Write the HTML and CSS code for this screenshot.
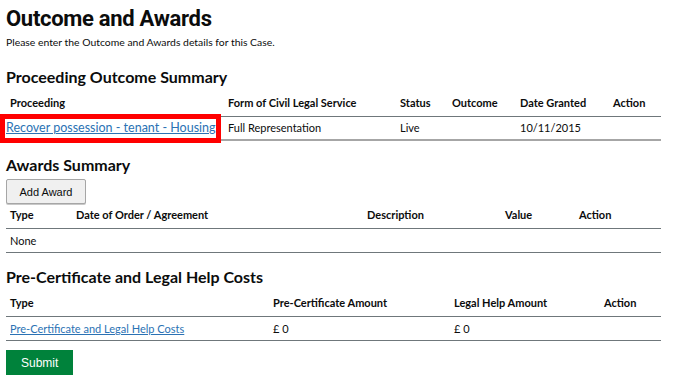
FILE: index.html
```html
<!DOCTYPE html>
<html lang="en">
<head>
    <meta charset="UTF-8">
    <meta name="viewport" content="width=device-width, initial-scale=1.0">
    <title>Outcome and Awards</title>
    <link rel="stylesheet" href="styles.css">
</head>
<body>
    <h1>Outcome and Awards</h1>
    <p class="lead">Please enter the Outcome and Awards details for this Case.</p>

    <h2>Proceeding Outcome Summary</h2>
    <table class="summary proceedings">
        <thead>
            <tr>
                <th class="c1">Proceeding</th>
                <th class="c2">Form of Civil Legal Service</th>
                <th class="c3">Status</th>
                <th class="c4">Outcome</th>
                <th class="c5">Date Granted</th>
                <th class="c6">Action</th>
            </tr>
        </thead>
        <tbody>
            <tr>
                <td class="highlight"><a href="#">Recover possession - tenant - Housing</a></td>
                <td>Full Representation</td>
                <td>Live</td>
                <td></td>
                <td>10/11/2015</td>
                <td></td>
            </tr>
        </tbody>
    </table>

    <h2>Awards Summary</h2>
    <button type="button" class="btn-secondary">Add Award</button>
    <table class="summary awards">
        <thead>
            <tr>
                <th class="c1">Type</th>
                <th class="c2">Date of Order / Agreement</th>
                <th class="c3">Description</th>
                <th class="c4">Value</th>
                <th class="c5">Action</th>
            </tr>
        </thead>
        <tbody>
            <tr>
                <td colspan="5">None</td>
            </tr>
        </tbody>
    </table>

    <h2>Pre-Certificate and Legal Help Costs</h2>
    <table class="summary costs">
        <thead>
            <tr>
                <th class="c1">Type</th>
                <th class="c2">Pre-Certificate Amount</th>
                <th class="c3">Legal Help Amount</th>
                <th class="c4">Action</th>
            </tr>
        </thead>
        <tbody>
            <tr>
                <td><a href="#" class="small-link">Pre-Certificate and Legal Help Costs</a></td>
                <td>£ 0</td>
                <td>£ 0</td>
                <td></td>
            </tr>
        </tbody>
    </table>

    <button type="submit" class="btn-primary">Submit</button>
</body>
</html>
```

FILE: styles.css
```css
body {
    font-family: Lato, "Noto Sans", Arial, sans-serif;
    color: #0b0c0c;
    margin: 0;
    padding: 6px 15px 0 6px;
}
h1 {
    font-family: Roboto, Lato, Arial, sans-serif;
    font-size: 22px;
    font-weight: 700;
    line-height: 26px;
    letter-spacing: -0.3px;
    margin: 0;
}
.lead {
    font-size: 10.4px;
    line-height: 16px;
    margin: 2px 0 17px;
}
h2 {
    font-size: 16px;
    font-weight: 700;
    line-height: 20px;
    margin: 14px 0 4px;
}
table.summary {
    width: 655px;
    border-collapse: collapse;
    table-layout: fixed;
    font-size: 11px;
}
.summary th {
    text-align: left;
    font-weight: 700;
    padding: 4px 4px 5px;
    line-height: 16px;
    border-bottom: 1px solid #6f777b;
}
.summary td {
    padding: 3px 4px 3px;
    line-height: 16px;
    height: 16px;
    white-space: nowrap;
    border-bottom: 2px solid #a6a6a6;
}
.awards td,
.costs td {
    padding: 4px 4px 3px;
    border-bottom: 1px solid #6f777b;
}
.proceedings .c1 { width: 210px; }
.proceedings .c2 { width: 164px; }
.proceedings .c3 { width: 44px; }
.proceedings .c4 { width: 60px; }
.proceedings .c5 { width: 85px; }
.awards .c1 { width: 58px; }
.awards .c2 { width: 283px; }
.awards .c3 { width: 130px; }
.awards .c4 { width: 66px; }
.costs .c1 { width: 255px; }
.costs .c2 { width: 173px; }
.costs .c3 { width: 142px; }
.highlight {
    position: relative;
}
.highlight::before {
    content: "";
    position: absolute;
    left: -6px;
    top: -3px;
    right: 3px;
    bottom: -4px;
    border: 5px solid #ff0000;
}
a {
    color: #2b72b4;
    text-decoration: underline;
}
.highlight a {
    font-size: 12.5px;
    margin-left: -4px;
}
.small-link {
    font-size: 11px;
}
button {
    font-family: "Liberation Sans", Arial, sans-serif;
    white-space: nowrap;
    cursor: pointer;
}
.btn-secondary {
    display: block;
    margin: 3px 0 -1px;
    padding: 0;
    width: 80px;
    height: 25px;
    font-size: 11px;
    background-color: #f0f0f0;
    color: #0b0c0c;
    border: 1px solid #a6a6a6;
    border-radius: 2px;
    box-shadow: 0 1px 0 #c8c8c8;
}
.btn-primary {
    display: block;
    margin-top: 9px;
    padding: 0 15px;
    height: 25px;
    font-size: 12px;
    background-color: #00823b;
    color: #fff;
    border: none;
    box-shadow: 0 2px 0 #003618;
}
```
